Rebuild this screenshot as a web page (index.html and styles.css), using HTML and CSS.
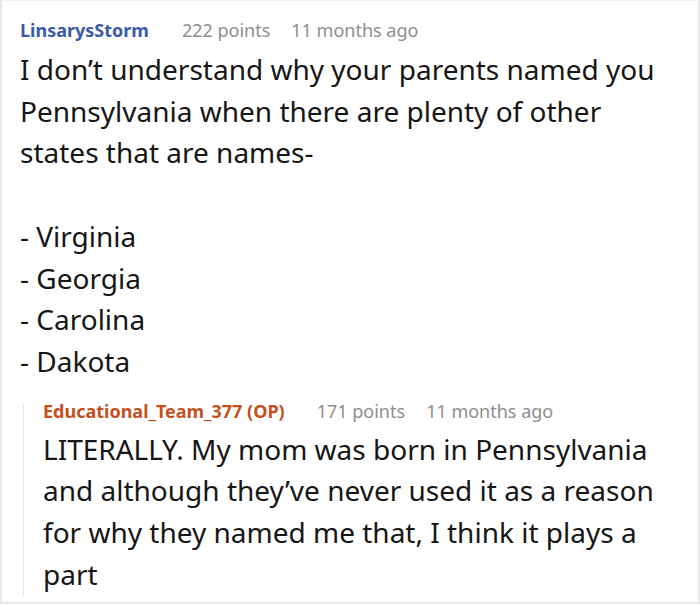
FILE: index.html
```html
<!DOCTYPE html>
<html>
<head>
<meta charset="utf-8">
<link rel="stylesheet" href="styles.css">
</head>
<body>
<div class="thread">
  <div class="comment">
    <div class="meta">
      <span class="author">LinsarysStorm</span>
      <span class="points">222 points</span>
      <span class="time">11 months ago</span>
    </div>
    <div class="text">I don’t understand why your parents named you Pennsylvania when there are plenty of other states that are names-<br><br>- Virginia<br>- Georgia<br>- Carolina<br>- Dakota</div>
    <div class="reply">
      <div class="meta">
        <span class="author op">Educational_Team_377 (OP)</span>
        <span class="points">171 points</span>
        <span class="time">11 months ago</span>
      </div>
      <div class="text">LITERALLY. My mom was born in Pennsylvania and although they’ve never used it as a reason for why they named me that, I think it plays a part</div>
    </div>
  </div>
</div>
</body>
</html>
```

FILE: styles.css
```css
html, body {
  margin: 0;
  padding: 0;
  background: #fff;
}
.thread {
  box-sizing: border-box;
  width: 700px;
  height: 604px;
  border: 2px solid #e8e8e8;
  border-top: 1px solid #efefef;
  font-family: "Noto Sans", "Open Sans", sans-serif;
  color: #1a1a1a;
  overflow: hidden;
}
.comment {
  padding: 15px 20px 0 18px;
}
.meta {
  display: flex;
  font-size: 18px;
  line-height: 28px;
  color: #8e8e8e;
}
.author {
  font-weight: 700;
  color: #3a5ba6;
  margin-right: 33px;
}
.points {
  margin-right: 21px;
}
.author.op {
  color: #c5501d;
  margin-right: 32px;
}
.text {
  margin-top: 5px;
  font-size: 28px;
  line-height: 41.7px;
  color: #161616;
}
.reply {
  margin: 22px 0 0 3px;
  border-left: 1px solid #e6e6e6;
  padding-left: 19px;
}
.reply .meta {
  line-height: 12px;
}
.reply .text {
  margin-top: 12px;
  margin-bottom: -13px;
}
```
